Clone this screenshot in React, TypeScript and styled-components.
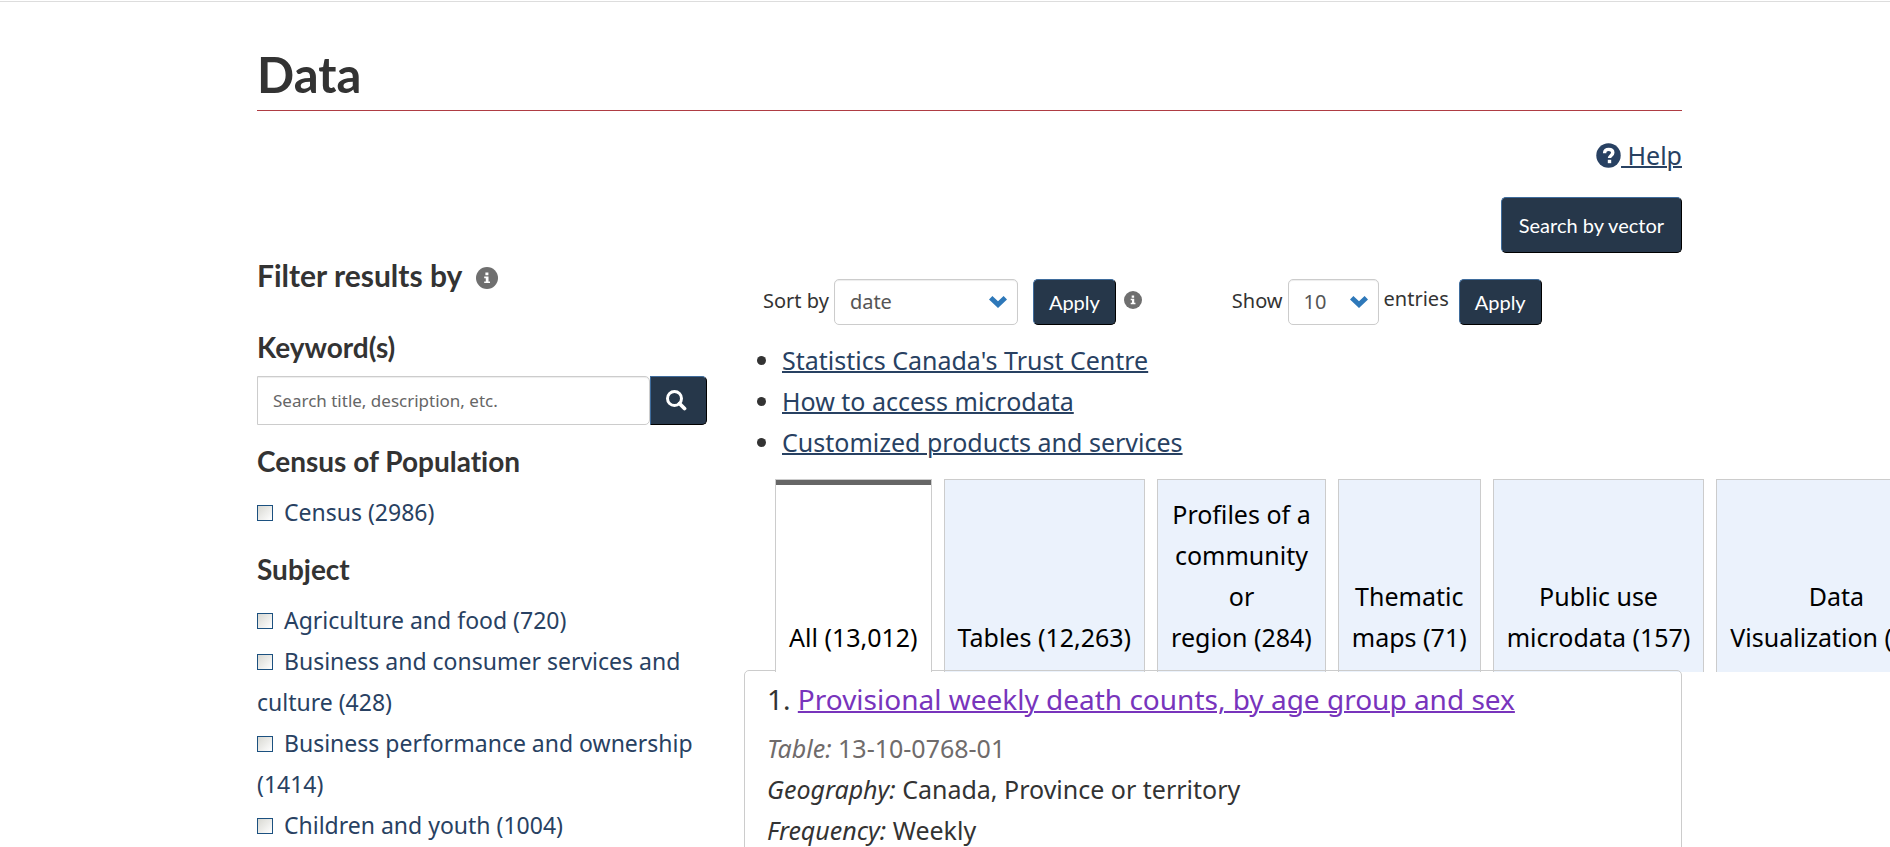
import React from "react";
import styled, { createGlobalStyle } from "styled-components";

const GlobalStyle = createGlobalStyle`
  *, *::before, *::after { box-sizing: border-box; }
  body {
    margin: 0;
    background: #fff;
    color: #333;
    font: 25px/41px "Noto Sans", sans-serif;
  }
  a { color: #284162; text-decoration-thickness: 2px; }
`;

const headingFont = `Lato, sans-serif`;

const Page = styled.div`
  overflow: hidden;
  padding: 1px 208px 24px 257px;
`;

const TopRule = styled.hr`
  margin: 0 -208px 0 -257px;
  border: 0;
  border-top: 1px solid #ddd;
`;

const Title = styled.h1`
  margin: 44px 0 0;
  padding-bottom: 8px;
  border-bottom: 1px solid #af3c43;
  font: 700 49px/56px ${headingFont};
`;

const HelpRow = styled.div`
  display: flex;
  justify-content: flex-end;
  margin-top: 24px;
`;

const HelpLink = styled.a`
  white-space: pre;
  svg { vertical-align: -3px; }
`;

const Button = styled.button<{ $large?: boolean }>`
  height: ${(p) => (p.$large ? 56 : 46)}px;
  padding: 0 ${(p) => (p.$large ? 17 : 15)}px;
  border: 1px solid;
  border-color: #3f6c9c #000 #000 #3f6c9c;
  border-radius: 5px;
  background: #26374a;
  color: #fff;
  font: 400 20px/28px ${headingFont};
  cursor: pointer;
`;

const VectorRow = styled.div`
  display: flex;
  justify-content: flex-end;
  margin-top: 21px;
`;

const Columns = styled.div`
  display: grid;
  grid-template-columns: 450fr 938fr;
  column-gap: 37px;
`;

const Sidebar = styled.aside`
  min-width: 0;
  font-size: 23px;
`;

const FilterTitle = styled.h2`
  display: flex;
  align-items: center;
  gap: 14px;
  margin: 2px 0 0;
  font: 700 30px/40px ${headingFont};
  font-variant-ligatures: none;
  svg { margin-top: 6px; }
`;

const GroupTitle = styled.h3`
  display: block;
  margin: 0;
  font: 700 28px/34px ${headingFont};
  font-variant-ligatures: none;
`;

const Group = styled.section`
  margin-top: 19px;
`;

const KeywordGroup = styled.section`
  margin-top: 35px;
`;

const SearchForm = styled.form`
  display: flex;
  margin-top: 12px;
`;

const SearchInput = styled.input`
  flex: 1;
  min-width: 0;
  height: 49px;
  padding: 0 15px;
  border: 1px solid #ccc;
  border-radius: 0 5px 5px 0;
  box-shadow: inset 0 1px 1px rgba(0, 0, 0, 0.075);
  color: #555;
  font: 17px/28px "Noto Sans", sans-serif;
  &::placeholder { color: #666; opacity: 1; }
`;

const SearchButton = styled(Button)`
  display: grid;
  place-items: center start;
  width: 57px;
  height: 49px;
  border-radius: 0 5px 5px 0;
`;

const FacetList = styled.ul`
  margin: 14px 0 0;
  padding: 0;
  list-style: none;
  color: #284162;
`;

const Checkbox = styled.input`
  appearance: none;
  width: 16px;
  height: 16px;
  margin: 0 11px 0 0;
  border: 1px solid #1c5180;
  background: linear-gradient(135deg, #d8d8d2, #fff);
  vertical-align: baseline;
`;

const Results = styled.main`
  min-width: 0;
`;

const Controls = styled.div`
  display: flex;
  align-items: center;
  margin: 25px 0 0 19px;
  font-size: 20px;
`;

const SelectWrap = styled.span<{ $width: number }>`
  display: grid;
  align-items: center;
  width: ${(p) => p.$width}px;
  margin: 0 5px;
  > * { grid-area: 1 / 1; }
  svg { justify-self: end; margin-right: 11px; pointer-events: none; }
`;

const Select = styled.select`
  appearance: none;
  width: 100%;
  height: 46px;
  padding: 0 15px;
  border: 1px solid #ccc;
  border-radius: 5px;
  background: #fff;
  box-shadow: inset 0 1px 1px rgba(0, 0, 0, 0.075);
  color: #555;
  font: 20px/28px "Noto Sans", sans-serif;
`;

const SortControl = styled.div`
  display: flex;
  align-items: center;
  label { padding-bottom: 2px; }
  > svg { margin: 0 0 3px 8px; }
  button { margin-left: 10px; }
`;

const ShowControl = styled(SortControl)`
  margin-left: 90px;
`;

const Suffix = styled.span`
  padding-bottom: 6px;
`;

const LinkList = styled.ul`
  margin: 15px 0 0;
  padding-left: 38px;
  li::marker { color: #333; }
`;

const Tabs = styled.div`
  display: flex;
  gap: 12px;
  width: max-content;
  margin: 16px 0 0 31px;
`;

const Tab = styled.button<{ $active?: boolean }>`
  display: flex;
  flex-direction: column;
  justify-content: flex-end;
  min-height: 193px;
  padding: 13px 13px 14px;
  border: 1px solid #ccc;
  border-bottom: 0;
  background: ${(p) => (p.$active ? "#fff" : "#ebf2fc")};
  box-shadow: ${(p) => (p.$active ? "inset 0 5px #666" : "none")};
  position: relative;
  z-index: ${(p) => (p.$active ? 2 : 0)};
  color: #000;
  font: inherit;
  text-align: center;
  cursor: pointer;
  span { display: block; width: 100%; white-space: pre-line; }
`;

const Panel = styled.section`
  position: relative;
  z-index: 1;
  margin-top: -2px;
  padding: 8px 22px;
  border: 1px solid #ccc;
  border-radius: 5px;
`;

const ResultTitle = styled.div`
  margin-bottom: 8px;
  font-size: 28px;
  a { color: #7834bc; }
`;

const Field = styled.div<{ $muted?: boolean }>`
  color: ${(p) => (p.$muted ? "#6f6b6b" : "#333")};
`;

const InfoIcon = ({ size }: { size: number }) => (
  <svg width={size} height={size} viewBox="0 0 22 22" role="img" aria-label="Information">
    <circle cx="11" cy="11" r="11" fill="#6f6f6f" />
    <path d="M9.4 5.6h3v2.6h-3zM8.2 9.6h4.3v4.8h1.5v1.7H8.2v-1.7h1.6v-3.1H8.2z" fill="#fff" />
  </svg>
);

const HelpIcon = () => (
  <svg width="25" height="25" viewBox="0 0 25 25" aria-hidden="true">
    <circle cx="12.5" cy="12.5" r="12.2" fill="#284162" />
    <path d="M8.6 10.2C8.6 7.6 10.2 6.4 12.7 6.4s4.1 1.2 4.1 3.4c0 2.6-3.3 2.7-3.3 5.2" fill="none" stroke="#fff" strokeWidth="3.4" />
    <path d="M11.8 16.8h3.4v3.4h-3.4z" fill="#fff" />
  </svg>
);

const SearchIcon = () => (
  <svg width="21" height="21" viewBox="0 0 21 21" aria-hidden="true">
    <circle cx="8.5" cy="8.5" r="7" fill="none" stroke="#fff" strokeWidth="3" />
    <path d="M13.5 13.5l5 5" stroke="#fff" strokeWidth="3.8" strokeLinecap="round" />
  </svg>
);

const ChevronIcon = () => (
  <svg width="18" height="12" viewBox="0 0 18 12" aria-hidden="true">
    <path d="M3.4 0L9 5.2 14.6 0 18 3.4 9 12 0 3.4z" fill="#2e78b9" />
  </svg>
);

const tabs = [
  "All (13,012)",
  "Tables (12,263)",
  "Profiles of a\ncommunity\nor\nregion (284)",
  "Thematic\nmaps (71)",
  "Public use\nmicrodata (157)",
  "Data\nVisualization (166)",
];

const subjects = [
  "Agriculture and food (720)",
  "Business and consumer services and culture (428)",
  "Business performance and ownership (1414)",
  "Children and youth (1004)",
];

const Facets = ({ title, items }: { title: string; items: string[] }) => (
  <Group>
    <GroupTitle>{title}</GroupTitle>
    <FacetList>
      {items.map((item) => (
        <li key={item}>
          <label>
            <Checkbox type="checkbox" />
            {item}
          </label>
        </li>
      ))}
    </FacetList>
  </Group>
);

export default function App() {
  return (
    <>
      <GlobalStyle />
      <Page>
        <TopRule />
        <Title>Data</Title>
        <HelpRow>
          <HelpLink href="#help"><HelpIcon /> Help</HelpLink>
        </HelpRow>
        <VectorRow>
          <Button type="button" $large>Search by vector</Button>
        </VectorRow>
        <Columns>
          <Sidebar>
            <FilterTitle>Filter results by <InfoIcon size={22} /></FilterTitle>
            <KeywordGroup>
              <GroupTitle as="label" htmlFor="keywords">Keyword(s)</GroupTitle>
              <SearchForm onSubmit={(e) => e.preventDefault()}>
                <SearchInput id="keywords" placeholder="Search title, description, etc." />
                <SearchButton type="submit" aria-label="Search"><SearchIcon /></SearchButton>
              </SearchForm>
            </KeywordGroup>
            <Facets title="Census of Population" items={["Census (2986)"]} />
            <Facets title="Subject" items={subjects} />
          </Sidebar>
          <Results>
            <Controls>
              <SortControl>
                <label htmlFor="sort">Sort by</label>
                <SelectWrap $width={184}>
                  <Select id="sort"><option>date</option><option>title</option></Select>
                  <ChevronIcon />
                </SelectWrap>
                <Button type="button">Apply</Button>
                <InfoIcon size={18} />
              </SortControl>
              <ShowControl>
                <label htmlFor="show">Show</label>
                <SelectWrap $width={91}>
                  <Select id="show"><option>10</option><option>25</option></Select>
                  <ChevronIcon />
                </SelectWrap>
                <Suffix>entries</Suffix>
                <Button type="button">Apply</Button>
              </ShowControl>
            </Controls>
            <LinkList>
              <li><a href="#trust">Statistics Canada's Trust Centre</a></li>
              <li><a href="#microdata">How to access microdata</a></li>
              <li><a href="#products">Customized products and services</a></li>
            </LinkList>
            <Tabs role="tablist">
              {tabs.map((t, i) => (
                <Tab key={t} type="button" role="tab" aria-selected={i === 0} $active={i === 0}>
                  <span>{t}</span>
                </Tab>
              ))}
            </Tabs>
            <Panel role="tabpanel">
              <ResultTitle>1. <a href="#result">Provisional weekly death counts, by age group and sex</a></ResultTitle>
              <Field $muted><em>Table:</em> 13-10-0768-01</Field>
              <Field><em>Geography:</em> Canada, Province or territory</Field>
              <Field><em>Frequency:</em> Weekly</Field>
            </Panel>
          </Results>
        </Columns>
      </Page>
    </>
  );
}
